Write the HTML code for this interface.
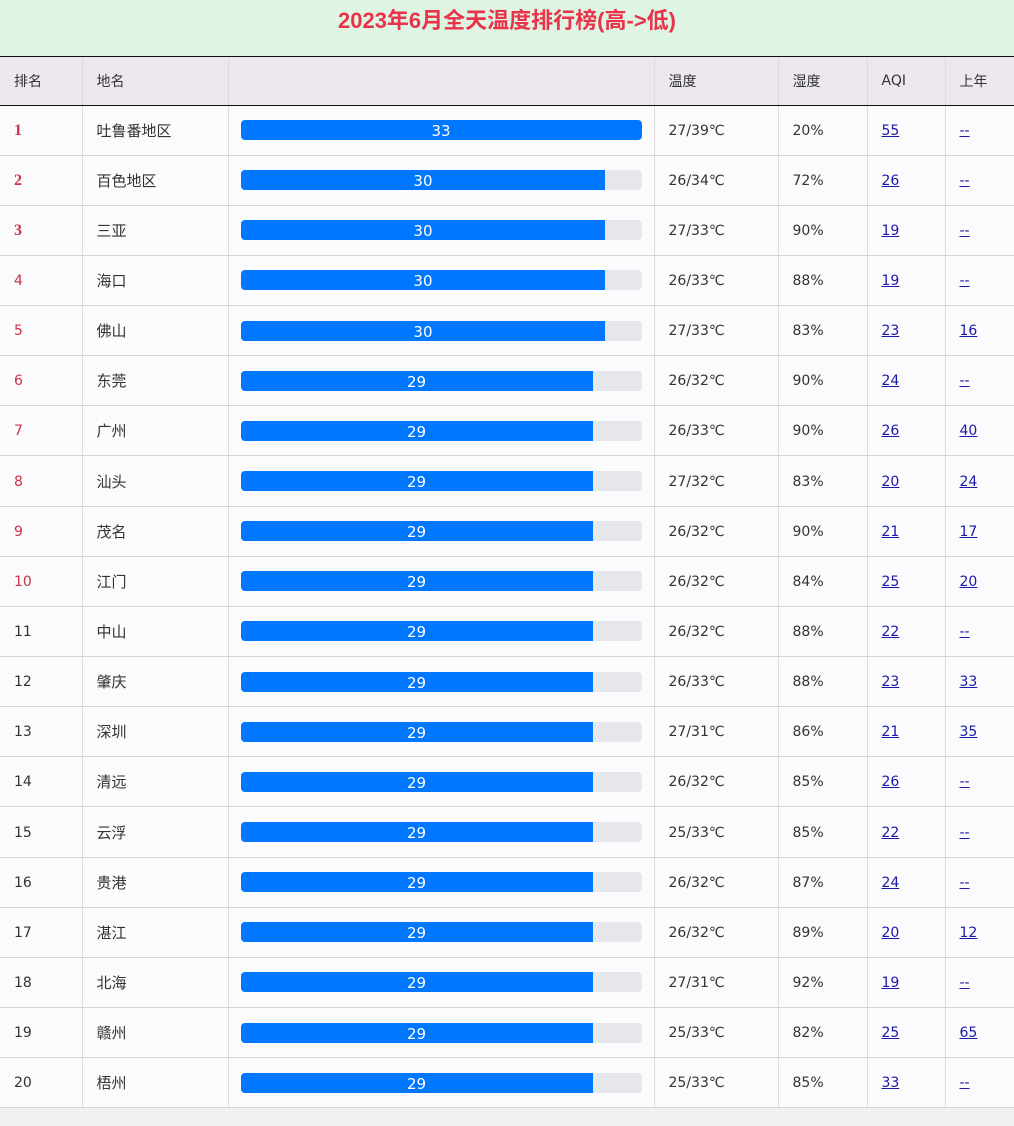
<!DOCTYPE html>
<html><head><meta charset="utf-8"><style>
*{margin:0;padding:0;box-sizing:border-box}
body{width:1014px;height:1126px;background:#f0f0f0;font-family:"DejaVu Sans","Noto Sans CJK SC",sans-serif;font-size:14px;color:#333;overflow:hidden}
.top{height:57px;background:#dff5e3;text-align:center;font-size:22px;font-weight:bold;color:#e8334a;line-height:42px;border-bottom:1px solid #111;font-family:"Liberation Sans","Noto Sans CJK SC",sans-serif}
table{border-collapse:collapse;width:1014px;table-layout:fixed;background:#fbfafc}
td,th{border-right:1px solid #dcdcdc;padding:0 0 0 14px;text-align:left;font-weight:normal;white-space:nowrap}
th{height:48px;background:#ede8ef;border-bottom:1px solid #111}
td{height:50.15px;border-bottom:1px solid #d5d5d5;padding-top:1px}
td.n{font-size:15px;padding-top:0}
td.b{padding:0 12px}
.bar{height:20px;background:#e6e7ea;border-radius:4px;position:relative;overflow:hidden}
.f{height:20px;background:#0077ff;color:#fff;text-align:center;line-height:22px;font-size:15px}
.r1{color:#c8334a;font-weight:bold;font-family:"Liberation Serif",serif;font-size:16px}
.r2{color:#c8334a}
a{color:#1a1aa6;text-decoration:underline;font-size:14px}
</style></head><body>
<div class="top">2023年6月全天温度排行榜(高-&gt;低)</div>
<table>
<colgroup><col style="width:82px"><col style="width:146px"><col style="width:426px"><col style="width:124px"><col style="width:89px"><col style="width:78px"><col style="width:69px"></colgroup>
<tr><th>排名</th><th>地名</th><th></th><th>温度</th><th>湿度</th><th>AQI</th><th>上年</th></tr>
<tr><td class="r1">1</td><td class="n">吐鲁番地区</td><td class="b"><div class="bar"><div class="f" style="width:100%">33</div></div></td><td>27/39℃</td><td>20%</td><td><a>55</a></td><td><a>--</a></td></tr>
<tr><td class="r1">2</td><td class="n">百色地区</td><td class="b"><div class="bar"><div class="f" style="width:91%">30</div></div></td><td>26/34℃</td><td>72%</td><td><a>26</a></td><td><a>--</a></td></tr>
<tr><td class="r1">3</td><td class="n">三亚</td><td class="b"><div class="bar"><div class="f" style="width:91%">30</div></div></td><td>27/33℃</td><td>90%</td><td><a>19</a></td><td><a>--</a></td></tr>
<tr><td class="r2">4</td><td class="n">海口</td><td class="b"><div class="bar"><div class="f" style="width:91%">30</div></div></td><td>26/33℃</td><td>88%</td><td><a>19</a></td><td><a>--</a></td></tr>
<tr><td class="r2">5</td><td class="n">佛山</td><td class="b"><div class="bar"><div class="f" style="width:91%">30</div></div></td><td>27/33℃</td><td>83%</td><td><a>23</a></td><td><a>16</a></td></tr>
<tr><td class="r2">6</td><td class="n">东莞</td><td class="b"><div class="bar"><div class="f" style="width:87.8%">29</div></div></td><td>26/32℃</td><td>90%</td><td><a>24</a></td><td><a>--</a></td></tr>
<tr><td class="r2">7</td><td class="n">广州</td><td class="b"><div class="bar"><div class="f" style="width:87.8%">29</div></div></td><td>26/33℃</td><td>90%</td><td><a>26</a></td><td><a>40</a></td></tr>
<tr><td class="r2">8</td><td class="n">汕头</td><td class="b"><div class="bar"><div class="f" style="width:87.8%">29</div></div></td><td>27/32℃</td><td>83%</td><td><a>20</a></td><td><a>24</a></td></tr>
<tr><td class="r2">9</td><td class="n">茂名</td><td class="b"><div class="bar"><div class="f" style="width:87.8%">29</div></div></td><td>26/32℃</td><td>90%</td><td><a>21</a></td><td><a>17</a></td></tr>
<tr><td class="r2">10</td><td class="n">江门</td><td class="b"><div class="bar"><div class="f" style="width:87.8%">29</div></div></td><td>26/32℃</td><td>84%</td><td><a>25</a></td><td><a>20</a></td></tr>
<tr><td>11</td><td class="n">中山</td><td class="b"><div class="bar"><div class="f" style="width:87.8%">29</div></div></td><td>26/32℃</td><td>88%</td><td><a>22</a></td><td><a>--</a></td></tr>
<tr><td>12</td><td class="n">肇庆</td><td class="b"><div class="bar"><div class="f" style="width:87.8%">29</div></div></td><td>26/33℃</td><td>88%</td><td><a>23</a></td><td><a>33</a></td></tr>
<tr><td>13</td><td class="n">深圳</td><td class="b"><div class="bar"><div class="f" style="width:87.8%">29</div></div></td><td>27/31℃</td><td>86%</td><td><a>21</a></td><td><a>35</a></td></tr>
<tr><td>14</td><td class="n">清远</td><td class="b"><div class="bar"><div class="f" style="width:87.8%">29</div></div></td><td>26/32℃</td><td>85%</td><td><a>26</a></td><td><a>--</a></td></tr>
<tr><td>15</td><td class="n">云浮</td><td class="b"><div class="bar"><div class="f" style="width:87.8%">29</div></div></td><td>25/33℃</td><td>85%</td><td><a>22</a></td><td><a>--</a></td></tr>
<tr><td>16</td><td class="n">贵港</td><td class="b"><div class="bar"><div class="f" style="width:87.8%">29</div></div></td><td>26/32℃</td><td>87%</td><td><a>24</a></td><td><a>--</a></td></tr>
<tr><td>17</td><td class="n">湛江</td><td class="b"><div class="bar"><div class="f" style="width:87.8%">29</div></div></td><td>26/32℃</td><td>89%</td><td><a>20</a></td><td><a>12</a></td></tr>
<tr><td>18</td><td class="n">北海</td><td class="b"><div class="bar"><div class="f" style="width:87.8%">29</div></div></td><td>27/31℃</td><td>92%</td><td><a>19</a></td><td><a>--</a></td></tr>
<tr><td>19</td><td class="n">赣州</td><td class="b"><div class="bar"><div class="f" style="width:87.8%">29</div></div></td><td>25/33℃</td><td>82%</td><td><a>25</a></td><td><a>65</a></td></tr>
<tr><td>20</td><td class="n">梧州</td><td class="b"><div class="bar"><div class="f" style="width:87.8%">29</div></div></td><td>25/33℃</td><td>85%</td><td><a>33</a></td><td><a>--</a></td></tr>
</table>
</body></html>
